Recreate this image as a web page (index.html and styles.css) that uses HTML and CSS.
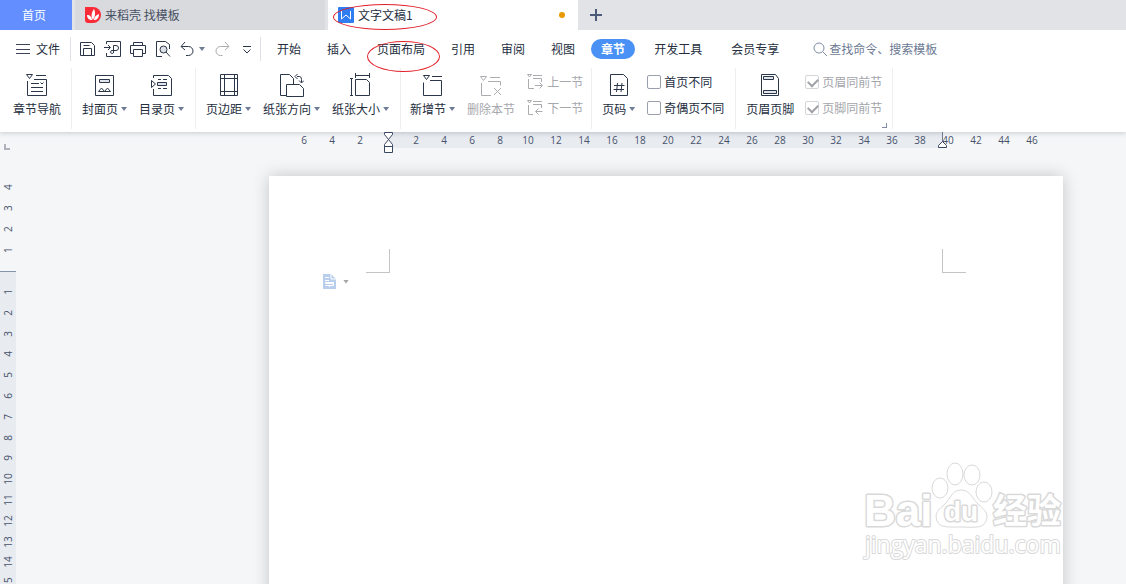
FILE: index.html
```html
<!DOCTYPE html>
<html lang="zh-CN">
<head>
  <title>文字文稿1</title>
  <meta charset="UTF-8">
  <meta name="viewport" content="width=device-width, initial-scale=1.0">
  <link rel="stylesheet" href="styles.css">
</head>
<body>
  <header>
    <nav class="tabs">
      <button class="tab tab-home">首页</button>
      <button class="tab tab-store">
        <svg width="16" height="16" viewBox="0 0 16 16">
          <path d="M0 0h8a8 8 0 0 1 0 16H3a3 3 0 0 1-3-3z" fill="#fb2b38"/>
          <path d="M8 13C6 10 6 6 9 2c2 4 1 8-1 11zM7 13c-3 0-5-2-5-5 3 0 5 2 5 5zM9 13c0-3 2-5 5-6 0 4-2 6-5 6z" fill="#fff"/>
        </svg>
        <span>来稻壳 找模板</span>
      </button>
      <button class="tab tab-doc">
        <svg width="16" height="16" viewBox="0 0 16 16">
          <rect width="16" height="16" rx="1" fill="#2f7df0"/>
          <path d="M3.500 4v8l4.500-4 4.500 4V4" fill="none" stroke="#fff"/>
        </svg>
        <span>文字文稿1</span>
        <i class="unsaved"></i>
        <i class="ring ring-doc"></i>
      </button>
      <button class="tab-add" aria-label="新建">
        <svg width="12" height="12" viewBox="0 0 12 12"><path d="M6 0v12M0 6h12" stroke="#4d5b78" stroke-width="2"/></svg>
      </button>
    </nav>

    <div class="menu">
      <button class="file">
        <svg width="14" height="10" viewBox="0 0 14 10"><path d="M0 .5h14M0 5.500h14M0 9.500h14" stroke="#3b4558"/></svg>
        <span>文件</span>
      </button>
      <div class="quick">
        <button aria-label="保存"><svg class="icon" viewBox="0 0 18 18"><path d="M1.500 2.500h11l3 3v10h-14zM4.500 15V8.500h8V15M4.500 5.500h6"/></svg></button>
        <button aria-label="输出为PDF"><svg class="icon" viewBox="0 0 18 18"><path d="M2.500 4V1.500h14v15h-14V13M0 7.500h6M4 5l2.500 2.500L4 10M9.500 13V5.500h2.500a2 2 0 0 1 0 5H8a1.500 1.500 0 1 0 1.500 2"/></svg></button>
        <button aria-label="打印"><svg class="icon" viewBox="0 0 18 18"><path d="M4.500 5V2.500h9V5M4 13.500H1.500v-8h15v8H14M4.500 9.500h9v7h-9z"/></svg></button>
        <button aria-label="打印预览"><svg class="icon" viewBox="0 0 18 18"><path d="M8 16.500H2.500v-15h9l4 3V9"/><circle cx="9.500" cy="9.500" r="3.500" fill="#dde1e8"/><path d="M12 12l4 4.500"/></svg></button>
        <button aria-label="撤销"><svg class="icon" viewBox="0 0 18 18"><path d="M6 2L2 6.500 6 10M2.500 6.500h7a4.500 4.500 0 0 1 0 9H7"/></svg></button>
        <button class="undo-list" aria-label="撤销列表"><i class="caret"></i></button>
        <button aria-label="恢复" disabled><svg class="icon" viewBox="0 0 18 18"><path d="M12 2l4 4.500-4 3.500M15.500 6.500h-8a4.500 4.500 0 0 0 0 9h2"/></svg></button>
        <button class="more" aria-label="更多"><svg class="icon" viewBox="0 0 18 18"><path d="M5 6.500h8M5.500 9.500L9 13l3.500-3.500"/></svg></button>
      </div>
      <div class="menu-items">
        <button>开始</button>
        <button>插入</button>
        <button class="marked">页面布局<i class="ring ring-menu"></i></button>
        <button>引用</button>
        <button>审阅</button>
        <button>视图</button>
        <button class="current">章节</button>
        <button class="wide">开发工具</button>
        <button class="wide">会员专享</button>
      </div>
      <label class="search">
        <svg width="15" height="15" viewBox="0 0 15 15"><circle cx="6" cy="6" r="5" fill="none" stroke="#7f8ba5"/><path d="M10 10l4 4" stroke="#7f8ba5"/></svg>
        <input type="text" placeholder="查找命令、搜索模板" aria-label="查找命令、搜索模板">
      </label>
    </div>

    <div class="ribbon">
      <div class="group group-first">
        <button class="tool">
          <svg class="icon big" viewBox="0 0 24 24"><path d="M1.500 1.500h6l-3 4zM11 2.500h10M2.500 8v14.500h19V6.500H9M6 10.500h8M6 14.500h12M6 18.500h12M15.500 9.500l1.500 1.500 1.500-1.500"/></svg>
          <span>章节导航</span>
        </button>
      </div>
      <div class="group">
        <button class="tool">
          <svg class="icon big" viewBox="0 0 24 24"><path d="M2.500 2.500h18v20h-18z"/><path d="M6.500 6.500h10v3h-10z" fill="#e1e4ea"/><path d="M5.500 18.500l3-3.500 3 3.500zM11.500 18.500l3-3.500 3 3.500z"/></svg>
          <span>封面页<i class="caret"></i></span>
        </button>
        <button class="tool">
          <svg class="icon big" viewBox="0 0 24 24"><path d="M3.500 5V2.500h15l3 3v17h-18V16M1.500 7.500v7l4-3.500zM8 6.500h3M13 6.500h4M8 15.500h3M13 15.500h4"/><path d="M7.500 9.500h9v3h-9z" fill="#e1e4ea"/></svg>
          <span>目录页<i class="caret"></i></span>
        </button>
      </div>
      <div class="group">
        <button class="tool">
          <svg class="icon big" viewBox="0 0 24 24"><path d="M3.500 1.500h17v21h-17zM7.500 1.500v21M17.500 1.500v21M3.500 5.500h17M3.500 18.500h17"/></svg>
          <span>页边距<i class="caret"></i></span>
        </button>
        <button class="tool">
          <svg class="icon big" viewBox="0 0 24 24"><path d="M6 22.500H.5v-21h9l4 4V11M6.500 11.500h13l4 4v8h-17zM17 3.500h2.500q2 0 2 3v3M17.500 1l-2.500 2.500L17.500 6M19 7.500l2.500 2.500L24 7.500"/></svg>
          <span>纸张方向<i class="caret"></i></span>
        </button>
        <button class="tool">
          <svg class="icon big" viewBox="0 0 24 24"><path d="M6.500 6.500h11l3 3v13h-14zM6 2.500h15M6.500 0v5M20.500 0v5M2.500 6v17M1 5.500h3M1 22.500h3"/></svg>
          <span>纸张大小<i class="caret"></i></span>
        </button>
      </div>
      <div class="group group-tight">
        <button class="tool">
          <svg class="icon big" viewBox="0 0 24 24"><path d="M2.500 2.500h6l-3 4zM11 3.500h10M2.500 9.500v13h18v-15H9"/></svg>
          <span>新增节<i class="caret"></i></span>
        </button>
        <button class="tool" disabled>
          <svg class="icon big" viewBox="0 0 24 24"><path d="M1.500 3.500h6l-3 4zM11 4.500h10M2.500 10v12.500H12M9 8.500h12.500v4M15 15l7 7M22 15l-7 7"/></svg>
          <span>删除本节</span>
        </button>
        <div class="stack">
          <button class="mini" disabled><svg class="icon" viewBox="0 0 16 16"><path d="M.5.5h4l-2 2.500zM6 1.500h9M1.500 5v9.500H7M6 4.500h8.500V8M8 11.500h7M12.500 8.500l3 3-3 3"/></svg>上一节</button>
          <button class="mini" disabled><svg class="icon" viewBox="0 0 16 16"><path d="M.5.5h4l-2 2.500zM6 1.500h9M1.500 5v9.500H6M6 4.500h8.500V8M9 11.500h6.500M11.500 8.500l-3 3 3 3"/></svg>下一节</button>
        </div>
      </div>
      <div class="group">
        <button class="tool">
          <svg class="icon big" viewBox="0 0 24 24"><path d="M3.500 1.500h13l4 4v17h-17zM10.500 10l-1 9M15 10l-1 9M7 12.500h10.500M6.500 16.500H17"/></svg>
          <span>页码<i class="caret"></i></span>
        </button>
        <div class="stack">
          <label class="check"><input type="checkbox">首页不同</label>
          <label class="check"><input type="checkbox">奇偶页不同</label>
        </div>
      </div>
      <div class="group group-last">
        <button class="tool">
          <svg class="icon big" viewBox="0 0 24 24"><path d="M3.500 1.500h14l3 4v17h-17z"/><path d="M5.500 3.500h10v3h-10zM5.500 17.500h13v3h-13z" fill="#e1e4ea"/></svg>
          <span>页眉页脚</span>
        </button>
        <div class="stack">
          <label class="check off"><input type="checkbox" checked disabled>页眉同前节</label>
          <label class="check off"><input type="checkbox" checked disabled>页脚同前节</label>
        </div>
        <i class="launcher"></i>
      </div>
    </div>
  </header>

  <main>
    <aside class="v-ruler">
      <i class="tab-stop"></i>
      <div class="v-margin" id="v-margin"></div>
      <div class="v-body" id="v-body"></div>
    </aside>
    <section class="workspace">
      <div class="h-ruler">
        <div class="scale" id="scale"></div>
        <svg class="indent-left" width="10" height="22" viewBox="0 0 10 22"><path d="M.5.500h8v2L4.500 7.500l4 5v2h-8v-2l4-5-4-5zM.5 14.500h8v6h-8z" fill="#fff" stroke="#3a4763"/></svg>
        <svg class="indent-right" width="10" height="16" viewBox="0 0 10 16"><path d="M4.500 0v10" stroke="#6c7a96"/><path d="M.5 15.500v-2l4-4 4 4v2z" fill="#fff" stroke="#3a4763"/></svg>
      </div>
      <article class="page">
        <div class="corners"><i class="corner corner-left"></i><i class="corner corner-right"></i></div>
        <button class="paste" aria-label="段落布局">
          <svg width="13" height="15" viewBox="0 0 13 15"><path d="M0 0h8l5 5v10H0z" fill="#b9cdec"/><path d="M8 0v5h5M2 3.500h4M2 6.500h4M2 8.500h9M2.500 9.500h8v2h-8M6.500 11v2" fill="none" stroke="#fff"/></svg>
          <i class="caret"></i>
        </button>
      </article>
      <svg class="watermark" width="206" height="104" viewBox="0 0 206 104">
        <g fill="#fff" stroke="#d9d9d9">
          <text class="wm-brand" x="2" y="66">Bai</text>
          <ellipse cx="78" cy="28" rx="8" ry="10"/>
          <ellipse cx="93" cy="14" rx="8" ry="11"/>
          <ellipse cx="110" cy="15" rx="8" ry="10"/>
          <ellipse cx="122" cy="32" rx="8" ry="10"/>
          <path d="M99 30c9 0 11 8 17 14 7 6 11 10 8 17-3 8-12 6-25 6s-21 1-24-6c-3-8 2-12 8-17 6-6 7-14 16-14z"/>
          <text class="wm-du" x="82" y="61">du</text>
          <text class="wm-cn" x="131" y="63">经验</text>
          <text class="wm-url" x="3" y="93">jingyan.baidu.com</text>
        </g>
      </svg>
    </section>
  </main>

  <script>
    function fillScale(id, numbers) {
      const box = document.getElementById(id);
      numbers.forEach(n => {
        const mark = document.createElement('span');
        mark.textContent = n || '';
        box.appendChild(mark);
      });
    }

    const across = [6, 4, 2];
    for (let n = 0; n <= 46; n += 2) {
      across.push(n);
    }
    fillScale('scale', across);
    fillScale('v-margin', [4, 3, 2, 1]);
    fillScale('v-body', Array.from({ length: 15 }, (_, i) => i + 1));
  </script>
</body>
</html>
```
FILE: styles.css
```css
* {
  box-sizing: border-box;
}
body {
  margin: 0;
  height: 100vh;
  display: flex;
  flex-direction: column;
  overflow: hidden;
  background: #f5f6f8;
  color: #242e40;
  font-family: "Noto Sans CJK SC", sans-serif;
  font-size: 12px;
  line-height: 18px;
}
button {
  display: flex;
  align-items: center;
  padding: 0;
  border: 0;
  background: none;
  color: inherit;
  font: inherit;
  white-space: nowrap;
}
button:disabled {
  color: #a6a8ad;
}
svg {
  display: block;
  flex: none;
}
.icon {
  width: 18px;
  height: 18px;
  fill: none;
  stroke: #2b3649;
}
.big {
  width: 24px;
  height: 24px;
}
button:disabled .icon {
  stroke: #aaacb0;
}
.caret {
  width: 6px;
  height: 4px;
  background: #6f7c95;
  clip-path: polygon(0 0, 100% 0, 50% 100%);
}

/* document tabs */
.tabs {
  display: flex;
  height: 30px;
  gap: 3px;
  background: #e2e3e7;
}
.tab {
  position: relative;
  width: 250px;
  padding: 0 10px;
  gap: 4px;
}
.tab-home {
  width: 72px;
  padding-right: 14px;
  justify-content: center;
  background: #628eff;
  color: #fff;
}
.tab-store {
  background: #d9dade;
  color: #465063;
}
.tab-doc {
  background: #fff;
}
.unsaved {
  width: 6px;
  height: 6px;
  margin-left: auto;
  margin-right: 3px;
  border-radius: 50%;
  background: #ea9a00;
}
.tab-add {
  margin-left: 9px;
}
.ring {
  position: absolute;
  border: 1px solid #e3202a;
  border-radius: 50%;
  pointer-events: none;
}
.ring-doc {
  left: 5px;
  top: 4px;
  width: 104px;
  height: 26px;
}
.ring-menu {
  left: 3px;
  top: 2px;
  width: 73px;
  height: 31px;
}

/* menu row */
.menu {
  position: relative;
  z-index: 2;
  display: flex;
  align-items: center;
  height: 38px;
  padding-left: 16px;
  background: #fff;
}
.file {
  gap: 6px;
  height: 24px;
  padding-right: 10px;
  border-right: 1px solid #dfe1e6;
}
.quick {
  display: flex;
  align-items: center;
  gap: 7px;
  height: 24px;
  padding: 0 4px 0 8px;
  border-right: 1px solid #dfe1e6;
}
.undo-list {
  margin: 0 1px 0 -5px;
}
.menu-items {
  display: flex;
  padding: 0 3px;
}
.menu-items button {
  height: 20px;
  padding: 0 13px;
}
.menu-items .marked {
  position: relative;
}
.menu-items .current {
  margin: 0 3px;
  padding: 0 10px;
  border-radius: 10px;
  background: #4991f5;
  color: #fff;
  font-weight: bold;
}
.menu-items .wide {
  padding: 0 13px 0 16px;
}
.search {
  display: flex;
  align-items: center;
  gap: 1px;
  margin-left: 18px;
}
.search input {
  width: 130px;
  padding: 0;
  border: 0;
  outline: 0;
  background: none;
  font: inherit;
}
.search input::placeholder {
  color: #6c7993;
}

/* ribbon */
.ribbon {
  position: relative;
  z-index: 1;
  display: flex;
  height: 64px;
  padding-bottom: 3px;
  background: #fff;
  box-shadow: 0 1px 5px rgba(60, 70, 90, 0.25);
}
.group {
  position: relative;
  display: flex;
  gap: 12px;
  padding: 5px 11px 0 10px;
  border-right: 1px solid #eeeff2;
}
.group-first {
  padding: 5px 10px 0 13px;
}
.group-tight {
  padding: 5px 8px 0 9px;
}
.group-last {
  gap: 11px;
  padding-right: 10px;
}
.tool {
  flex-direction: column;
  gap: 3px;
  height: 45px;
}
.tool span {
  display: flex;
  align-items: center;
  gap: 3px;
}
.stack {
  display: flex;
  flex-direction: column;
  gap: 8px;
}
.mini {
  gap: 4px;
}
.mini .icon {
  width: 16px;
  height: 16px;
}
.check {
  display: flex;
  align-items: center;
  gap: 3px;
}
.check input {
  position: relative;
  appearance: none;
  width: 14px;
  height: 14px;
  margin: 0;
  border: 1px solid #9a9fab;
  border-radius: 2px;
  background: #fff;
}
.check.off {
  color: #a3a5aa;
}
.check.off input {
  border-color: #d4d6da;
}
.check input:checked::after {
  content: "";
  position: absolute;
  left: 2px;
  top: 2px;
  width: 8px;
  height: 5px;
  border-left: 2px solid #a0a2a7;
  border-bottom: 2px solid #a0a2a7;
  transform: rotate(-45deg);
}
.launcher {
  position: absolute;
  right: 5px;
  bottom: 1px;
  width: 5px;
  height: 5px;
  border-right: 1px solid #7f8aa3;
  border-bottom: 1px solid #7f8aa3;
}

/* rulers */
main {
  display: flex;
  flex: 1;
  min-height: 0;
}
.v-ruler {
  display: flex;
  flex-direction: column;
  width: 16px;
  padding-top: 12px;
  overflow: hidden;
}
.tab-stop {
  flex: none;
  width: 6px;
  height: 6px;
  margin-left: 4px;
  border-left: 2px solid #adb2bd;
  border-bottom: 2px solid #adb2bd;
}
.v-margin,
.v-body {
  display: grid;
  flex: none;
  grid-auto-rows: 1fr;
  color: #46526b;
  font-family: "Open Sans", sans-serif;
  font-size: 10px;
  line-height: 16px;
}
.v-margin {
  height: 84px;
  margin: 27px 0 10px;
}
.v-body {
  height: 323px;
  padding-top: 10px;
  border-top: 1px solid #8593ad;
  background: #e8ebf0;
}
.v-ruler span {
  writing-mode: vertical-rl;
  transform: rotate(180deg);
  text-align: center;
}
.workspace {
  position: relative;
  flex: 1;
  overflow: hidden;
}
.h-ruler {
  position: relative;
  width: 794px;
  height: 16px;
  margin: 0 63px 28px auto;
  background: linear-gradient(to right, transparent 119px, #e8ebf0 119px 673px, transparent 673px);
}
.scale {
  display: flex;
  padding-left: 21px;
  color: #46526b;
  font-family: "Open Sans", sans-serif;
  font-size: 10px;
  line-height: 16px;
}
.scale span {
  width: 28px;
  text-align: center;
}
.indent-left,
.indent-right {
  position: absolute;
  top: 0;
  z-index: 2;
}
.indent-left {
  left: 115px;
}
.indent-right {
  left: 669px;
}

/* page */
.page {
  width: 794px;
  height: 1123px;
  margin: 0 63px 0 auto;
  padding: 73px 97px;
  background: #fff;
  box-shadow: 0 0 16px rgba(0, 0, 0, 0.2);
}
.corners {
  display: flex;
  justify-content: space-between;
}
.corner {
  width: 24px;
  height: 24px;
  border-bottom: 1px solid #c4c4c4;
}
.corner-left {
  border-right: 1px solid #c4c4c4;
}
.corner-right {
  border-left: 1px solid #c4c4c4;
}
.paste {
  gap: 7px;
  margin: 1px 0 0 -43px;
}
.paste .caret {
  background: #a5a5a5;
}
.watermark {
  position: absolute;
  right: 58px;
  bottom: 20px;
  font-weight: bold;
}
.watermark text {
  paint-order: stroke;
  stroke-width: 3px;
  stroke-linejoin: round;
}
.watermark .wm-brand {
  font-family: "Liberation Sans", sans-serif;
  font-size: 44px;
}
.watermark .wm-du {
  font-family: "Liberation Sans", sans-serif;
  font-size: 28px;
}
.watermark .wm-cn {
  font-family: "Noto Sans CJK SC", sans-serif;
  font-size: 34px;
}
.watermark .wm-url {
  font-family: "Open Sans", sans-serif;
  font-size: 23px;
  font-weight: normal;
  stroke-width: 2px;
}
```
